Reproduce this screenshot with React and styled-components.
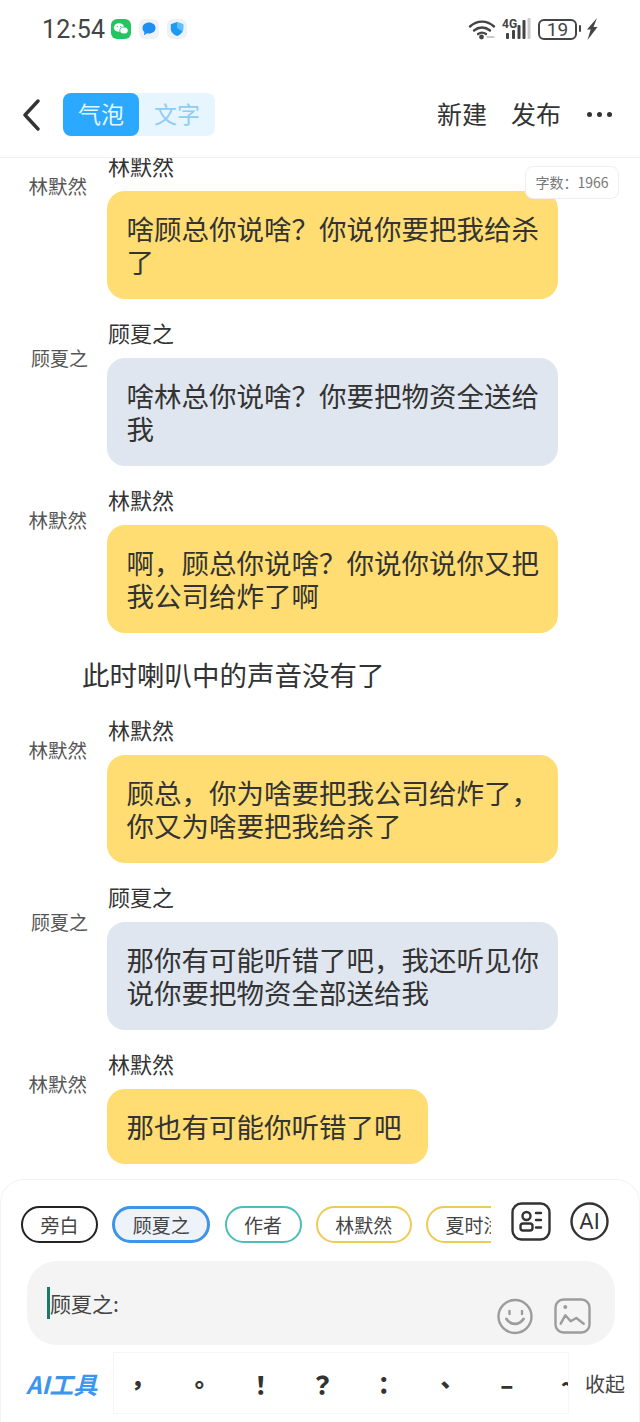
import styled, { createGlobalStyle } from "styled-components";

const GlobalStyle = createGlobalStyle`
  html, body {
    margin: 0;
    padding: 0;
    background: #fff;
    font-family: "Noto Sans CJK SC", "Noto Sans", sans-serif;
  }
  * { box-sizing: border-box; }
`;

const Page = styled.div`
  width: 640px;
  height: 1422px;
  display: flex;
  flex-direction: column;
  overflow: hidden;
  background: #fff;
`;

const StatusBar = styled.div`
  height: 48px;
  padding: 10px 42px 0 42px;
  display: flex;
  align-items: center;
  flex-shrink: 0;
`;

const Time = styled.span`
  font-family: "Roboto", sans-serif;
  font-size: 25px;
  color: #444;
  letter-spacing: 0.2px;
  margin-right: 6px;
`;

const AppIcons = styled.div`
  display: flex;
  align-items: center;
  gap: 8px;
  flex: 1;
`;

const StatusIcons = styled.div`
  display: flex;
  align-items: center;
  gap: 6px;
`;

const Battery = styled.div`
  position: relative;
  width: 39px;
  height: 21px;
  border: 2px solid #444;
  border-radius: 6px;
  font-family: "Roboto", sans-serif;
  font-size: 19px;
  line-height: 17px;
  text-align: center;
  color: #444;
  margin: 0 3px 0 1px;

  &::after {
    content: "";
    position: absolute;
    right: -6px;
    top: 4px;
    width: 2px;
    height: 7px;
    border-radius: 1px;
    background: #444;
  }
`;

const Header = styled.div`
  height: 110px;
  flex-shrink: 0;
  display: flex;
  align-items: center;
  padding: 24px 28px 0 23px;
  border-bottom: 1px solid #f0f0f0;
`;

const Segments = styled.div`
  display: flex;
  width: 152px;
  height: 43px;
  margin-left: 23px;
  background: #e6f5fe;
  border-radius: 8px;
  flex-shrink: 0;
`;

const Segment = styled.div`
  width: 76px;
  padding-bottom: 3px;
  border-radius: 8px;
  display: flex;
  align-items: center;
  justify-content: center;
  font-size: 23px;
  background: ${(props) => (props.$active ? "#2ba8ff" : "transparent")};
  color: ${(props) => (props.$active ? "#e8f6ff" : "#8ecdf3")};
`;

const HeaderActions = styled.div`
  margin-left: auto;
  display: flex;
  align-items: center;
  gap: 24px;
`;

const HeaderAction = styled.span`
  font-size: 25px;
  line-height: 30px;
  padding-bottom: 4px;
  color: #333;
`;

const Dots = styled.div`
  display: flex;
  gap: 5px;
  margin-left: 2px;
`;

const Dot = styled.i`
  display: block;
  width: 5px;
  height: 5px;
  border-radius: 50%;
  background: #333;
`;

const Thread = styled.div`
  flex: 1;
  position: relative;
  overflow: hidden;
`;

const Messages = styled.div`
  margin-top: -2px;
  display: flex;
  flex-direction: column;
`;

const Row = styled.div`
  display: flex;
  margin-bottom: 24px;
`;

// the two speakers sit at slightly different heights in the reference
const Speaker = styled.div`
  width: 107px;
  padding: ${(props) => (props.$tone === "grey" ? "23px 19px" : "18px 20px")} 0 0;
  text-align: right;
  font-size: ${(props) => (props.$tone === "grey" ? 19 : 19.5)}px;
  line-height: 24px;
  color: #555;
  flex-shrink: 0;
`;

const Body = styled.div`
  display: flex;
  flex-direction: column;
  align-items: flex-start;
  width: 451px;
`;

const Name = styled.div`
  font-size: 22px;
  line-height: 18px;
  height: 24px;
  color: #333;
  margin-left: 1px;
  margin-bottom: 11px;
`;

const Bubble = styled.div`
  padding: 21px ${(props) => props.$padRight || 18}px 21px 19.5px;
  border-radius: 18px;
  font-size: 27.5px;
  line-height: 33px;
  color: #333;
  background: ${(props) => (props.$tone === "grey" ? "#e0e6ef" : "#ffdd72")};
`;

const Narration = styled.div`
  padding-left: 82px;
  font-size: 27.5px;
  line-height: 32px;
  height: 36px;
  color: #333;
  margin: 1px 0 26px;
`;

const WordCount = styled.div`
  position: absolute;
  top: 8px;
  right: 21px;
  width: 94px;
  height: 33px;
  border: 1px solid #eee;
  border-radius: 8px;
  background: #fff;
  font-size: 14px;
  line-height: 31px;
  text-align: center;
  color: #777;
`;

const Composer = styled.div`
  height: 243px;
  flex-shrink: 0;
  border: 1px solid #f3f3f3;
  border-bottom: 0;
  border-radius: 24px 24px 0 0;
  margin-top: -1px;
  padding: 22px 0 0 20px;
  background: #fff;
`;

const ChipBar = styled.div`
  display: flex;
  align-items: flex-start;
  height: 44px;
`;

const Chips = styled.div`
  width: 470px;
  margin-top: 4px;
  display: flex;
  gap: 14.25px;
  overflow: hidden;
  flex-shrink: 0;
`;

const Chip = styled.div`
  flex-shrink: 0;
  height: 37px;
  padding: 0 17.5px;
  border-radius: 19px;
  border: ${(props) => (props.$active ? 3 : 2)}px solid ${(props) => props.$color};
  background: ${(props) => (props.$active ? "#eef3fa" : "#fff")};
  display: flex;
  align-items: center;
  font-size: 19px;
  color: #444;
  white-space: nowrap;
`;

const ToolIcons = styled.div`
  display: flex;
  align-items: center;
  gap: 19px;
  margin-left: 20px;
`;

const InputBox = styled.div`
  position: relative;
  margin: 15px 0 0 6px;
  width: 588px;
  height: 84px;
  border-radius: 30px;
  background: #f4f4f4;
  padding: 26px 0 0 20px;
  display: flex;
`;

const Caret = styled.i`
  display: block;
  width: 3px;
  height: 32px;
  background: #1a7a6a;
`;

const InputText = styled.span`
  font-size: 21px;
  line-height: 32px;
  color: #444;
`;

const InputIcons = styled.div`
  margin-left: auto;
  margin-right: 24px;
  margin-top: 11px;
  display: flex;
  gap: 21px;
  height: 37px;
`;

const BottomBar = styled.div`
  display: flex;
  align-items: center;
  margin-top: 7px;
  margin-left: -21px;
`;

const AiTools = styled.div`
  width: 113px;
  padding-left: 26px;
  font-size: 24px;
  font-weight: 600;
  font-style: italic;
  color: #3d96ee;
  white-space: nowrap;
  flex-shrink: 0;
`;

const PunctuationStrip = styled.div`
  width: 456px;
  height: 62px;
  border: 1px solid #f6f6f6;
  display: flex;
  overflow: hidden;
  flex-shrink: 0;
`;

const Punct = styled.div`
  flex: 0 0 61.5px;
  display: flex;
  align-items: center;
  justify-content: center;
  font-family: "Noto Sans CJK TC", sans-serif;
  font-size: 24px;
  font-weight: 900;
  color: #333;

  &:first-child {
    margin-left: -7px;
  }
`;

const Collapse = styled.div`
  font-size: 20px;
  color: #444;
  margin-left: 16px;
  white-space: nowrap;
`;

const messages = [
  { who: "林默然", text: "啥顾总你说啥\uFF1F你说你要把我给杀了" },
  { who: "顾夏之", text: "啥林总你说啥\uFF1F你要把物资全送给我", tone: "grey" },
  { who: "林默然", text: "啊\uFF0C顾总你说啥\uFF1F你说你说你又把我公司给炸了啊" },
  { note: "此时喇叭中的声音没有了" },
  { who: "林默然", text: "顾总\uFF0C你为啥要把我公司给炸了\uFF0C你又为啥要把我给杀了" },
  { who: "顾夏之", text: "那你有可能听错了吧\uFF0C我还听见你说你要把物资全部送给我", tone: "grey" },
  { who: "林默然", text: "那也有可能你听错了吧", padRight: 26 },
];

const chips = [
  { label: "旁白", color: "#222" },
  { label: "顾夏之", color: "#3f93e8", active: true },
  { label: "作者", color: "#4dbdb8" },
  { label: "林默然", color: "#eecb55" },
  { label: "夏时浅", color: "#eecb55" },
];

const punctuation = ["\uFF0C", "。", "\uFF01", "\uFF1F", "\uFF1A", "、", "\u2013", "~"];

function WeChatIcon() {
  return (
    <svg width="20" height="20" viewBox="0 0 20 20">
      <rect width="20" height="20" rx="6" fill="#22c660" />
      <ellipse cx="8" cy="8.5" rx="5.2" ry="4.3" fill="#fff" />
      <ellipse cx="13" cy="11.5" rx="4.2" ry="3.4" fill="#fff" stroke="#22c660" strokeWidth="0.8" />
      <circle cx="6.3" cy="7.6" r="0.7" fill="#22c660" />
      <circle cx="9.6" cy="7.6" r="0.7" fill="#22c660" />
    </svg>
  );
}

function MessageIcon() {
  return (
    <svg width="20" height="20" viewBox="0 0 20 20">
      <rect width="20" height="20" rx="6" fill="#eef1f6" />
      <path d="M10 3.500c3.700 0 6.500 2.300 6.500 5.500s-2.800 5.500-6.500 5.500c-.7 0-1.300-.1-1.900-.2L5 16.300l.4-3.200C4.200 12 3.500 10.600 3.500 9c0-3.200 2.800-5.500 6.500-5.500z" fill="#1d8ff2" />
    </svg>
  );
}

function ShieldIcon() {
  return (
    <svg width="20" height="20" viewBox="0 0 20 20">
      <rect width="20" height="20" rx="6" fill="#eef1f6" />
      <path d="M10 3l6.200 2.200v4.600c0 3.400-2.600 5.800-6.200 7.200-3.600-1.400-6.200-3.800-6.200-7.200V5.200z" fill="#1d9af2" />
      <path d="M10 3l6.200 2.200v4.600c0 1-.2 2-.7 2.800L10 9z" fill="#5cc0fa" />
    </svg>
  );
}

function WifiIcon() {
  return (
    <svg width="28" height="22" viewBox="0 0 28 22" fill="none" stroke="#444" strokeLinecap="round">
      <path d="M2 8.500C9 2 19 2 26 8.500" strokeWidth="2.400" />
      <path d="M6 12.500c4.800-4 11.200-4 16 0" strokeWidth="2.400" />
      <path d="M10 16c2.500-1.800 5.500-1.800 8 0" strokeWidth="2.200" />
      <circle cx="13.500" cy="19" r="2.400" fill="#444" stroke="none" />
      <path d="M19 19h7" stroke="#bbb" strokeWidth="1.500" />
    </svg>
  );
}

function SignalIcon() {
  return (
    <svg width="29" height="22" viewBox="0 0 29 22">
      <text x="0" y="10" fontSize="12" fontWeight="700" fontFamily="Roboto, sans-serif" fill="#444">4G</text>
      <rect x="4" y="15" width="3" height="6" rx="1" fill="#444" />
      <rect x="10" y="12" width="3" height="9" rx="1" fill="#444" />
      <rect x="15.500" y="7" width="3" height="14" rx="1" fill="#444" />
      <rect x="20.500" y="2" width="3" height="19" rx="1" fill="#444" />
      <rect x="25.500" y="0" width="3" height="21" rx="1" fill="#c9c9c9" />
    </svg>
  );
}

function BoltIcon() {
  return (
    <svg width="12" height="22" viewBox="0 0 12 22">
      <path d="M11 0L1 11.500h3.700L1.500 22 11.500 9H7.500l3.500-9z" fill="#444" />
    </svg>
  );
}

function BackIcon() {
  return (
    <svg width="17" height="32" viewBox="0 0 17 32" fill="none" stroke="#333" strokeWidth="3.400" strokeLinecap="round" strokeLinejoin="round">
      <path d="M15 2L2 16l13 14" />
    </svg>
  );
}

function ContactIcon() {
  return (
    <svg width="40" height="39" viewBox="0 0 40 39" fill="none" stroke="#333" strokeWidth="2.400" strokeLinecap="round">
      <rect x="1.500" y="1.500" width="37" height="36" rx="9" />
      <circle cx="15.500" cy="14" r="4" />
      <rect x="9.500" y="21.500" width="12" height="7" rx="2.500" />
      <path d="M25 11h5M25 18h5M25 25.500h5" />
    </svg>
  );
}

function AiCircleIcon() {
  return (
    <svg width="39" height="39" viewBox="0 0 39 39">
      <circle cx="19.500" cy="19.500" r="18" fill="none" stroke="#333" strokeWidth="2.400" />
      <text x="19.500" y="27" textAnchor="middle" fontSize="22" fontFamily="Roboto, sans-serif" fill="#333">AI</text>
    </svg>
  );
}

function SmileIcon() {
  return (
    <svg width="36" height="37" viewBox="0 0 36 37" fill="none" stroke="#9c9c9c" strokeWidth="2.400" strokeLinecap="round">
      <circle cx="18" cy="18.500" r="16.500" />
      <path d="M12.500 13v3M25 13v3" />
      <path d="M9.500 21c4.500 6.500 12.500 6.500 17 0" strokeWidth="2.800" />
    </svg>
  );
}

function ImageIcon() {
  return (
    <svg width="37" height="36" viewBox="0 0 37 36" fill="none" stroke="#9c9c9c" strokeWidth="2.400" strokeLinecap="round" strokeLinejoin="round">
      <rect x="1.500" y="1.500" width="34" height="33" rx="8" />
      <circle cx="11.300" cy="9" r="2" fill="#9c9c9c" stroke="none" />
      <path d="M6.700 25.700l4.600-8.400 5.400 6 5.600-3.300 7.400 5.700" />
    </svg>
  );
}

function App() {
  return (
    <Page>
      <GlobalStyle />
      <StatusBar>
        <Time>12:54</Time>
        <AppIcons>
          <WeChatIcon />
          <MessageIcon />
          <ShieldIcon />
        </AppIcons>
        <StatusIcons>
          <WifiIcon />
          <SignalIcon />
          <Battery>19</Battery>
          <BoltIcon />
        </StatusIcons>
      </StatusBar>

      <Header>
        <BackIcon />
        <Segments>
          <Segment $active>气泡</Segment>
          <Segment>文字</Segment>
        </Segments>
        <HeaderActions>
          <HeaderAction>新建</HeaderAction>
          <HeaderAction>发布</HeaderAction>
          <Dots>
            <Dot />
            <Dot />
            <Dot />
          </Dots>
        </HeaderActions>
      </Header>

      <Thread>
        <Messages>
          {messages.map((item, index) =>
            item.note ? (
              <Narration key={index}>{item.note}</Narration>
            ) : (
              <Row key={index}>
                <Speaker $tone={item.tone}>{item.who}</Speaker>
                <Body>
                  <Name>{item.who}</Name>
                  <Bubble $tone={item.tone} $padRight={item.padRight}>
                    {item.text}
                  </Bubble>
                </Body>
              </Row>
            )
          )}
        </Messages>
        <WordCount>字数{"\uFF1A"}1966</WordCount>
      </Thread>

      <Composer>
        <ChipBar>
          <Chips>
            {chips.map((chip) => (
              <Chip key={chip.label} $color={chip.color} $active={chip.active}>
                {chip.label}
              </Chip>
            ))}
          </Chips>
          <ToolIcons>
            <ContactIcon />
            <AiCircleIcon />
          </ToolIcons>
        </ChipBar>
        <InputBox>
          <Caret />
          <InputText>顾夏之:</InputText>
          <InputIcons>
            <SmileIcon />
            <ImageIcon />
          </InputIcons>
        </InputBox>
        <BottomBar>
          <AiTools>AI工具</AiTools>
          <PunctuationStrip>
            {punctuation.map((mark) => (
              <Punct key={mark}>{mark}</Punct>
            ))}
          </PunctuationStrip>
          <Collapse>收起</Collapse>
        </BottomBar>
      </Composer>
    </Page>
  );
}

export default App;
